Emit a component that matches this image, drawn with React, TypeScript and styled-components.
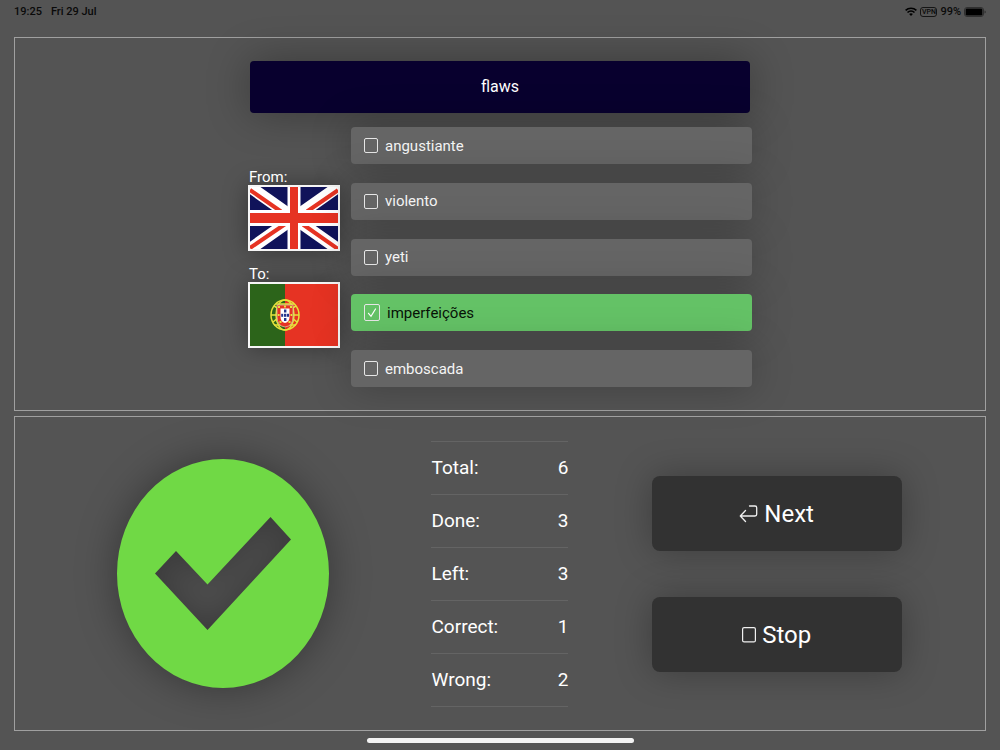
import React, { useState } from "react";
import styled, { createGlobalStyle } from "styled-components";

const GlobalStyle = createGlobalStyle`
  *, *::before, *::after { box-sizing: border-box; }
  body {
    margin: 0;
    background: #545454;
    color: #fff;
    font-family: Roboto, "Liberation Sans", sans-serif;
  }
  button, input { font-family: inherit; }
`;

const Page = styled.div`
  display: flex;
  flex-direction: column;
  min-height: 100vh;
  padding: 0 14px;
`;

const StatusBar = styled.header`
  display: flex;
  justify-content: space-between;
  height: 37px;
  padding-top: 4px;
  color: #0a0a0a;
  font-size: 11px;
  font-weight: 500;
  line-height: 15px;
`;

const StatusGroup = styled.div<{ $gap: number }>`
  display: flex;
  align-items: center;
  gap: ${(p) => p.$gap}px;
  height: 15px;
`;

const Panel = styled.section<{ $fill?: boolean }>`
  display: flex;
  flex-direction: column;
  flex: ${(p) => (p.$fill ? "1 0 auto" : "0 0 auto")};
  justify-content: center;
  align-items: ${(p) => (p.$fill ? "stretch" : "center")};
  gap: 14px;
  padding: ${(p) => (p.$fill ? "0 70px" : "23px 0")};
  border: 1px solid #a0a0a0;
  & + & { margin-top: 5px; }
`;

const Word = styled.h1`
  width: 500px;
  max-width: 100%;
  margin: 0;
  border-radius: 4px;
  background: #08002e;
  box-shadow: 0 0 44px rgba(0, 0, 0, 0.32);
  font-size: 16px;
  font-weight: 400;
  line-height: 52px;
  text-align: center;
`;

const Quiz = styled.div`
  display: flex;
  gap: 11px;
  width: 504px;
  max-width: 100%;
`;

const Languages = styled.div`
  display: flex;
  flex-direction: column;
  gap: 14px;
  width: 92px;
  padding-top: 41px;
`;

const Language = styled.figure`
  margin: 0;
  font-size: 15px;
  line-height: 15px;
  svg {
    display: block;
    width: 100%;
    height: 66px;
    border: 2px solid #f6f6f6;
    box-shadow: 0 0 24px rgba(0, 0, 0, 0.35);
  }
`;

const Caption = styled.figcaption`
  padding: 2px 0 0 1px;
`;

const Options = styled.div`
  display: flex;
  flex: 1;
  flex-direction: column;
  justify-content: space-between;
  height: 260px;
`;

const Option = styled.label<{ $correct: boolean }>`
  display: flex;
  align-items: center;
  gap: 7px;
  height: 37px;
  padding: 0 13px;
  border-radius: 4px;
  background: ${(p) => (p.$correct ? "#64c266" : "#656565")};
  color: ${(p) => (p.$correct ? "#081408" : "#f4f4f4")};
  box-shadow: 0 0 40px rgba(0, 0, 0, 0.26);
  font-size: 15px;
  line-height: 20px;
`;

const TickBox = styled.span`
  display: grid;
  place-items: center;
  > * { grid-area: 1 / 1; }
  svg { pointer-events: none; }
`;

const Tick = styled.input`
  appearance: none;
  width: 14px;
  height: 15px;
  margin: 0;
  border: 1px solid #e6e6e6;
  border-radius: 2px;
  &:checked { width: 16px; height: 17px; }
`;

const Results = styled.div`
  display: grid;
  grid-template-columns: repeat(3, 1fr);
  align-items: center;
  justify-items: center;
`;

const Verdict = styled.svg`
  width: 212px;
  height: 229px;
  overflow: visible;
  filter: drop-shadow(0 0 20px rgba(0, 0, 0, 0.35));
`;

const Stats = styled.table`
  width: 137px;
  border-collapse: collapse;
  font-size: 19px;
  line-height: 24px;
  tr { height: 53px; border-top: 1px solid #646464; border-bottom: 1px solid #646464; }
  th, td { padding: 0; font-weight: 400; text-align: left; }
  td { text-align: right; }
`;

const Actions = styled.div`
  display: flex;
  flex-direction: column;
  gap: 46px;
  width: 250px;
`;

const Action = styled.button`
  display: flex;
  align-items: center;
  justify-content: center;
  gap: 6px;
  height: 75px;
  padding: 2px 0 0;
  border: 0;
  border-radius: 8px;
  background: #323232;
  color: #fff;
  box-shadow: 0 0 36px rgba(0, 0, 0, 0.28);
  font-size: 24px;
  line-height: 30px;
`;

const Footer = styled.footer`
  display: flex;
  justify-content: center;
  height: 19px;
  padding-top: 7px;
`;

const HomeBar = styled.div`
  width: 267px;
  height: 5px;
  border-radius: 3px;
  background: #f2f2f2;
`;

const Wifi = () => (
  <svg width="12" height="9" viewBox="0 0 12 9" fill="none" stroke="#000" strokeWidth="1.6">
    <path d="M.6 3.4a7.7 7.7 0 0 1 10.8 0" />
    <path d="M2.5 5.5a5 5 0 0 1 7 0" />
    <path d="M6 9 4.1 7.1a2.7 2.7 0 0 1 3.8 0Z" fill="#000" stroke="none" />
  </svg>
);

const VpnBadge = styled.span`
  width: 17px;
  height: 10px;
  border: 1px solid #151515;
  border-radius: 3px;
  font-size: 7px;
  font-weight: 500;
  line-height: 8px;
  text-align: center;
`;

const Battery = () => (
  <svg width="22" height="10" viewBox="0 0 22 10">
    <rect x=".5" y=".5" width="19" height="9" rx="2.5" fill="none" stroke="#303030" />
    <rect x="1.6" y="1.4" width="16.800" height="7.200" rx="1.4" fill="#000" />
    <path d="M20.500 3.4q1.300.3 1.300 1.600T20.500 6.600Z" fill="#303030" />
  </svg>
);

const BritishFlag = () => (
  <svg viewBox="0 0 88 62" preserveAspectRatio="none" role="img" aria-label="English">
    <rect width="88" height="62" fill="#10135a" />
    <path d="M0 0 88 62M88 0 0 62" stroke="#fff" strokeWidth="12" />
    <path d="M0 3 31 24.5M57 24.5 88 3.2M0 61 36 36.5M53 37.5 88 62" stroke="#e63323" strokeWidth="4" />
    <path d="M44 0V62" stroke="#fff" strokeWidth="13" />
    <path d="M0 31H88" stroke="#fff" strokeWidth="16" />
    <path d="M44 0V62" stroke="#e63323" strokeWidth="8" />
    <path d="M0 31H88" stroke="#e63323" strokeWidth="10" />
  </svg>
);

const PortugueseFlag = () => (
  <svg viewBox="0 0 88 62" preserveAspectRatio="none" role="img" aria-label="Portuguese">
    <rect width="88" height="62" fill="#e63323" />
    <rect width="35" height="62" fill="#2c641a" />
    <g fill="none" stroke="#e5e23c" strokeWidth="1.5">
      <ellipse cx="35" cy="31" rx="14" ry="15" />
      <ellipse cx="35" cy="31" rx="9" ry="15" />
      <path d="M21 31H49M24 22Q35 28 47 38M46 22Q35 28 23 38M24 41H46M26 20H44" />
    </g>
    <path d="M27 21H43V33Q43 42 35 43Q27 42 27 33Z" fill="#e63323" stroke="#d8c7a0" strokeWidth=".8" />
    <path d="M30.5 24.5H39.5V33Q39.5 38 35 39Q30.5 38 30.5 33Z" fill="#fff" />
    <g fill="#25358c">
      <rect x="34" y="25.5" width="2.4" height="3" />
      <rect x="34" y="29.8" width="2.4" height="3" />
      <rect x="34" y="34" width="2.4" height="3" />
      <rect x="31.2" y="29.8" width="2" height="3" />
      <rect x="37" y="29.8" width="2" height="3" />
    </g>
    <g fill="#e5e23c">
      <rect x="28" y="22" width="2" height="2" />
      <rect x="34" y="21.5" width="2" height="2" />
      <rect x="40" y="22" width="2" height="2" />
      <rect x="27.8" y="30" width="1.8" height="2" />
      <rect x="40.5" y="30" width="1.8" height="2" />
      <rect x="29.5" y="37" width="2" height="2" />
      <rect x="38.5" y="37" width="2" height="2" />
    </g>
  </svg>
);

const ReturnIcon = () => (
  <svg width="19" height="18" viewBox="0 0 19 18" fill="none" stroke="#f0f0f0" strokeWidth="1.3" strokeLinecap="round" strokeLinejoin="round">
    <path d="M10.5 1H16Q17.7 1 17.7 2.7V9.3Q17.7 11 16 11H1.3M6.5 5.5 1.3 11 6.5 16.5" />
  </svg>
);

const StopIcon = () => (
  <svg width="14" height="16" viewBox="0 0 14 16" fill="none" stroke="#f0f0f0" strokeWidth="1.2">
    <rect x=".6" y=".6" width="12.8" height="14.3" rx="1.5" />
  </svg>
);

const words = ["angustiante", "violento", "yeti", "imperfeições", "emboscada"];
const stats: [string, number][] = [
  ["Total:", 6],
  ["Done:", 3],
  ["Left:", 3],
  ["Correct:", 1],
  ["Wrong:", 2],
];

export default function App() {
  const [picked, setPicked] = useState("imperfeições");
  return (
    <>
      <GlobalStyle />
      <Page>
        <StatusBar>
          <StatusGroup $gap={9}>
            <span>19:25</span>
            <span>Fri 29 Jul</span>
          </StatusGroup>
          <StatusGroup $gap={3}>
            <Wifi />
            <VpnBadge>VPN</VpnBadge>
            <span>99%</span>
            <Battery />
          </StatusGroup>
        </StatusBar>
        <Panel>
          <Word>flaws</Word>
          <Quiz>
            <Languages>
              <Language>
                <Caption>From:</Caption>
                <BritishFlag />
              </Language>
              <Language>
                <Caption>To:</Caption>
                <PortugueseFlag />
              </Language>
            </Languages>
            <Options>
              {words.map((word) => (
                <Option key={word} $correct={word === picked}>
                  <TickBox>
                    <Tick type="checkbox" checked={word === picked} onChange={() => setPicked(word)} />
                    {word === picked && (
                      <svg width="16" height="17" viewBox="0 0 16 17" fill="none" stroke="#fff" strokeWidth="1.2" strokeLinecap="round">
                        <path d="M4.5 9.3 7 12.3 11.5 5" />
                      </svg>
                    )}
                  </TickBox>
                  {word}
                </Option>
              ))}
            </Options>
          </Quiz>
        </Panel>
        <Panel $fill>
          <Results>
            <Verdict viewBox="0 0 212 229" role="img" aria-label="Correct answer">
              <path
                fill="#70d945"
                fillRule="evenodd"
                d="M106 0A106 114.5 0 0 1 106 229A106 114.5 0 0 1 106 0ZM38 114.5 90.5 171 174 80.5 153.5 58 90.5 125.5 59 92Z"
              />
            </Verdict>
            <Stats>
              <tbody>
                {stats.map(([name, value]) => (
                  <tr key={name}>
                    <th scope="row">{name}</th>
                    <td>{value}</td>
                  </tr>
                ))}
              </tbody>
            </Stats>
            <Actions>
              <Action type="button">
                <ReturnIcon />
                Next
              </Action>
              <Action type="button">
                <StopIcon />
                Stop
              </Action>
            </Actions>
          </Results>
        </Panel>
        <Footer>
          <HomeBar />
        </Footer>
      </Page>
    </>
  );
}
